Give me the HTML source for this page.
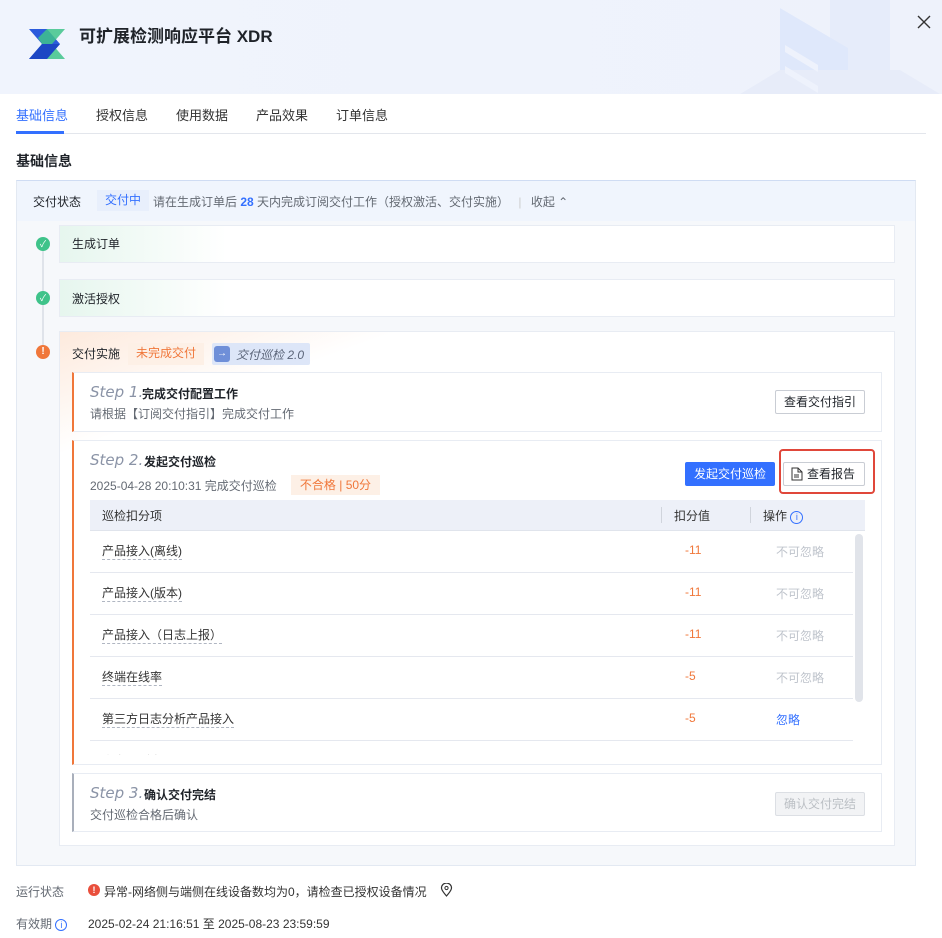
<!DOCTYPE html>
<html><head><meta charset="utf-8"><style>
*{box-sizing:border-box;margin:0;padding:0}
body{width:942px;height:938px;overflow:hidden;background:#fff;font-family:"Liberation Sans","Noto Sans CJK SC",sans-serif;color:#1f2329;font-size:12px;position:relative}
.a{position:absolute}
.hdr{left:0;top:0;width:942px;height:94px;background:linear-gradient(90deg,#f0f4fd,#eef2fb)}
.tab{top:105px;font-size:13px;color:#333}
.card{background:#fff;border:1px solid #e8ecf3}
.step{font-style:italic;font-size:15px;color:#8a93a6;font-family:"DejaVu Sans","Liberation Sans",sans-serif}
.btn{border:1px solid #c9cdd4;background:#fff;font-size:12px;color:#1f2329;text-align:center;line-height:22px;border-radius:2px}
.row{left:90px;width:763px;height:42px;border-bottom:1px solid #e5e8ef}
.row span{position:absolute;top:12px}
.it{left:12px;color:#333;border-bottom:1px dashed #b0b6c2;line-height:16px}
.v{left:595px;color:#f0773a}
.op{left:686px;color:#bfc4cc}
</style></head><body>
<div class="a hdr"></div>
<svg class="a" style="left:740px;top:0;opacity:.6" width="200" height="94"><path d="M90 0 L150 0 L150 94 L90 94Z" fill="#e2e9fa"/><path d="M40 8 L108 48 L108 94 L40 94Z" fill="#d6e2fb"/><path d="M0 94 L40 70 L160 70 L200 94Z" fill="#e3e9f8"/><path d="M45 45 L78 65 L78 72 L45 52Z" fill="#eef3fe"/><path d="M45 66 L78 86 L78 93 L45 73Z" fill="#eef3fe"/></svg>
<svg class="a" style="left:28px;top:28px" width="38" height="33"><path d="M1 1 L19 1 L32 16 L19 31 L1 31 L14 16Z" fill="#2b5bdc"/><path d="M19 1 L37 1 L24 16 L37 31 L19 31 L10 22 L14 16 L10 10Z" fill="#3fc38a" opacity=".85"/><path d="M14 16 L32 16 L19 31 L1 31Z" fill="#1d47c4"/></svg>
<div class="a" style="left:79px;top:22px;font-size:17px;font-weight:bold;color:#1f2329">可扩展检测响应平台 XDR</div>
<svg class="a" style="left:917px;top:15px" width="14" height="14"><path d="M1 1L13 13M13 1L1 13" stroke="#333" stroke-width="1.4"/></svg>
<div class="a tab" style="left:16px;color:#3370ff">基础信息</div>
<div class="a tab" style="left:96px">授权信息</div>
<div class="a tab" style="left:176px">使用数据</div>
<div class="a tab" style="left:256px">产品效果</div>
<div class="a tab" style="left:336px">订单信息</div>
<div class="a" style="left:16px;top:133px;width:910px;height:1px;background:#e3e6ec"></div>
<div class="a" style="left:16px;top:131px;width:48px;height:3px;background:#3370ff"></div>
<div class="a" style="left:16px;top:151px;font-size:14px;font-weight:bold">基础信息</div>
<div class="a" style="left:16px;top:180px;width:900px;height:686px;background:#f6f8fb;border:1px solid #e3e9f2;border-top-color:#cfdcf3"></div>
<div class="a" style="left:17px;top:181px;width:898px;height:40px;background:#f0f5fd"></div>
<div class="a" style="left:33px;top:193px">交付状态</div>
<div class="a" style="left:97px;top:190px;width:52px;height:21px;background:#e8effc;color:#3370ff;text-align:center;line-height:21px">交付中</div>
<div class="a" style="left:153px;top:193px;color:#646a73">请在生成订单后 <b style="color:#3370ff">28</b> 天内完成订阅交付工作（授权激活、交付实施） <span style="color:#ccc;margin:0 6px">|</span> 收起 ⌃</div>
<div class="a" style="left:42px;top:244px;width:2px;height:108px;background:#dfe3ea"></div>
<div class="a" style="left:36px;top:237px;width:14px;height:14px;border-radius:7px;background:#3fc38a;color:#fff;font-size:9px;text-align:center;line-height:14px">✓</div>
<div class="a" style="left:36px;top:291px;width:14px;height:14px;border-radius:7px;background:#3fc38a;color:#fff;font-size:9px;text-align:center;line-height:14px">✓</div>
<div class="a" style="left:36px;top:345px;width:14px;height:14px;border-radius:7px;background:#f0773a;color:#fff;font-size:10px;font-weight:bold;text-align:center;line-height:14px">!</div>
<div class="a card" style="left:59px;top:225px;width:836px;height:38px;background:linear-gradient(90deg,#e6f6ee,#fff 20%)"></div>
<div class="a" style="left:72px;top:235px">生成订单</div>
<div class="a card" style="left:59px;top:279px;width:836px;height:38px;background:linear-gradient(90deg,#e6f6ee,#fff 20%)"></div>
<div class="a" style="left:72px;top:290px">激活授权</div>
<div class="a card" style="left:59px;top:331px;width:836px;height:515px;background:linear-gradient(160deg,#fdeadd,#fff 15%)"></div>
<div class="a" style="left:72px;top:345px">交付实施</div>
<div class="a" style="left:128px;top:343px;width:76px;height:22px;background:#fdf0e6;color:#f0773a;text-align:center;line-height:21px">未完成交付</div>
<div class="a" style="left:212px;top:343px;width:98px;height:22px;background:#dde6f8;border-radius:2px"></div>
<div class="a" style="left:214px;top:346px;width:16px;height:16px;background:#6f8fd8;border-radius:3px;color:#fff;font-size:10px;text-align:center;line-height:16px">→</div>
<div class="a" style="left:236px;top:346px;font-style:italic;color:#5a6478">交付巡检 2.0</div>
<div class="a card" style="left:72px;top:372px;width:810px;height:60px;border-left:2px solid #f0773a"></div>
<div class="a step" style="left:90px;top:383px">Step 1.</div>
<div class="a" style="left:142px;top:385px;font-weight:bold">完成交付配置工作</div>
<div class="a" style="left:90px;top:405px;color:#646a73">请根据【订阅交付指引】完成交付工作</div>
<div class="a btn" style="left:775px;top:390px;width:90px;height:24px">查看交付指引</div>
<div class="a card" style="left:72px;top:440px;width:810px;height:325px;border-left:2px solid #f0773a"></div>
<div class="a step" style="left:90px;top:451px">Step 2.</div>
<div class="a" style="left:144px;top:453px;font-weight:bold">发起交付巡检</div>
<div class="a" style="left:90px;top:477px;color:#646a73">2025-04-28 20:10:31 完成交付巡检</div>
<div class="a" style="left:291px;top:475px;width:89px;height:20px;background:#fdf0e6;color:#f0773a;text-align:center;line-height:20px">不合格 | 50分</div>
<div class="a" style="left:685px;top:462px;width:90px;height:24px;background:#3370ff;color:#fff;text-align:center;line-height:24px;border-radius:2px">发起交付巡检</div>
<div class="a btn" style="left:783px;top:462px;width:82px;height:24px;padding-left:14px">查看报告</div>
<svg class="a" style="left:791px;top:467px" width="12" height="14"><path d="M1 1h6l4 4v8H1z M7 1v4h4 M3 8h5 M3 10h5" fill="none" stroke="#333" stroke-width="1"/></svg>
<div class="a" style="left:779px;top:449px;width:96px;height:45px;border:2px solid #e0473a;border-radius:4px"></div>
<div class="a" style="left:90px;top:500px;width:775px;height:31px;background:#edf0f8;border-bottom:1px solid #e0e4ec"></div>
<div class="a" style="left:102px;top:507px;color:#333">巡检扣分项</div>
<div class="a" style="left:661px;top:507px;width:1px;height:16px;background:#d0d4dc"></div>
<div class="a" style="left:674px;top:507px;color:#333">扣分值</div>
<div class="a" style="left:750px;top:507px;width:1px;height:16px;background:#d0d4dc"></div>
<div class="a" style="left:763px;top:507px;color:#333">操作 <span style="display:inline-block;width:13px;height:13px;border:1px solid #3370ff;border-radius:7px;color:#3370ff;font-size:9px;text-align:center;line-height:11px">i</span></div>
<div class="a" style="left:90px;top:531px;width:775px;height:224px;overflow:hidden">
<div class="a row" style="left:0;top:0"><span class="it">产品接入(离线)</span><span class="v">-11</span><span class="op">不可忽略</span></div>
<div class="a row" style="left:0;top:42px"><span class="it">产品接入(版本)</span><span class="v">-11</span><span class="op">不可忽略</span></div>
<div class="a row" style="left:0;top:84px"><span class="it">产品接入（日志上报）</span><span class="v">-11</span><span class="op">不可忽略</span></div>
<div class="a row" style="left:0;top:126px"><span class="it">终端在线率</span><span class="v">-5</span><span class="op">不可忽略</span></div>
<div class="a row" style="left:0;top:168px"><span class="it">第三方日志分析产品接入</span><span class="v">-5</span><span class="op" style="color:#3370ff">忽略</span></div>
<div class="a row" style="left:0;top:210px"><span class="it">资产识别率</span><span class="v">-5</span><span class="op" style="color:#3370ff">忽略</span></div>
<div class="a" style="left:765px;top:3px;width:8px;height:168px;background:#e1e4ea;border-radius:4px"></div>
</div>
<div class="a card" style="left:72px;top:773px;width:810px;height:59px;border-left:2px solid #a9afbb"></div>
<div class="a step" style="left:90px;top:784px">Step 3.</div>
<div class="a" style="left:144px;top:786px;font-weight:bold">确认交付完结</div>
<div class="a" style="left:90px;top:806px;color:#646a73">交付巡检合格后确认</div>
<div class="a btn" style="left:775px;top:792px;width:90px;height:24px;background:#f2f3f5;color:#bbbfc4;border-color:#dcdfe4">确认交付完结</div>
<div class="a" style="left:16px;top:883px;color:#646a73">运行状态</div>
<div class="a" style="left:88px;top:884px;width:12px;height:12px;border-radius:6px;background:#e94f3c;color:#fff;font-size:9px;font-weight:bold;text-align:center;line-height:12px">!</div>
<div class="a" style="left:104px;top:883px;color:#333">异常-网络侧与端侧在线设备数均为0，请检查已授权设备情况</div>
<svg class="a" style="left:440px;top:883px" width="13" height="14"><path d="M6.5 13 C3 9 1.5 7 1.5 5 A5 5 0 0 1 11.5 5 C11.5 7 10 9 6.5 13Z" fill="none" stroke="#333" stroke-width="1.2"/><circle cx="6.5" cy="5" r="1.6" fill="none" stroke="#333"/></svg>
<div class="a" style="left:16px;top:915px;color:#646a73">有效期 <span style="display:inline-block;width:12px;height:12px;border:1px solid #3370ff;border-radius:6px;color:#3370ff;font-size:9px;text-align:center;line-height:10px">i</span></div>
<div class="a" style="left:88px;top:915px;color:#333">2025-02-24 21:16:51 至 2025-08-23 23:59:59</div>
</body></html>
